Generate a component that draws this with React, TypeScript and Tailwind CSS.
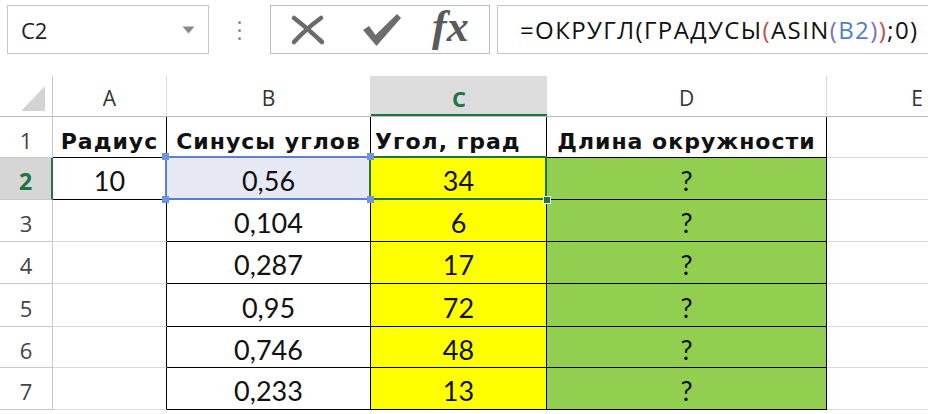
import React from 'react';

const rowHeights = ['h-[41px]', 'h-[42px]', 'h-[42px]', 'h-[42px]', 'h-[43px]', 'h-[41px]', 'h-[42px]'];

const data: [string, string, string][] = [
  ['10', '0,56', '34'],
  ['', '0,104', '6'],
  ['', '0,287', '17'],
  ['', '0,95', '72'],
  ['', '0,746', '48'],
  ['', '0,233', '13'],
];

const valueText = "font-['Lato',sans-serif] text-[27px] text-[#111] pt-[6px]";
const headText = "font-['DejaVu_Sans',sans-serif] font-bold text-[22px] tracking-[1px] text-[#111] pt-[8px] whitespace-nowrap";

function XIcon() {
  return (
    <svg width="36" height="32" viewBox="0 0 36 32">
      <path d="M4 4 Q 17 14 32 28" stroke="#6b6b6b" strokeWidth="4.5" fill="none" strokeLinecap="round" />
      <path d="M31 4 Q 17 14 4 28" stroke="#6b6b6b" strokeWidth="4.5" fill="none" strokeLinecap="round" />
    </svg>
  );
}

function CheckIcon() {
  return (
    <svg width="40" height="34" viewBox="0 0 40 34">
      <path d="M1 17 L7 13 L13.5 22 L35 1 L39 5 L14.5 33 Z" fill="#6d6d6d" />
    </svg>
  );
}

function Handle({ pos, color }: { pos: string; color: string }) {
  return <div className={`absolute w-[7px] h-[7px] ${pos} ${color} z-20`} />;
}

export default function App() {
  return (
    <div className="w-[928px] h-[414px] overflow-hidden bg-white font-['Lato',sans-serif] select-none">
      {/* formula bar */}
      <div className="flex items-start pt-[5px] h-[54px]">
        <div className="ml-[7px] w-[202px] h-[49px] border border-[#c6c6c6] flex items-center justify-between pl-[13px] pr-[13px]">
          <span className="font-['Open_Sans',sans-serif] text-[22px] text-[#222] pt-[1px]">C2</span>
          <svg width="13" height="8" viewBox="0 0 13 8">
            <path d="M0.5 0.5 L12.5 0.5 L6.5 7.5 Z" fill="#8a8a8a" />
          </svg>
        </div>
        <div className="w-[61px] h-[49px] flex flex-col items-center justify-center gap-[5px] pt-[2px]">
          <div className="w-[3px] h-[3px] rounded-full bg-[#8a8a8a]" />
          <div className="w-[3px] h-[3px] rounded-full bg-[#8a8a8a]" />
          <div className="w-[3px] h-[3px] rounded-full bg-[#8a8a8a]" />
        </div>
        <div className="w-[220px] h-[49px] border border-[#bdbdbd] flex items-center pl-[19px]">
          <XIcon />
          <div className="ml-[36px]"><CheckIcon /></div>
          <span className="ml-[30px] font-['Liberation_Serif',serif] italic font-bold text-[44px] leading-none text-[#5a5a5a] pb-[6px]">fx</span>
        </div>
        <div className="ml-[7px] flex-1 h-[49px] border border-[#c6c6c6] border-r-0 flex items-center pl-[22px] whitespace-nowrap">
          <span className="font-['Open_Sans',sans-serif] text-[24px] text-[#111] pt-[1px] tracking-[1.4px]">
            =ОКРУГЛ(ГРАДУСЫ<span className="text-[#c0504d]">(</span>ASIN<span className="text-[#7b6fbe]">(</span><span className="text-[#4f7fc8]">B2</span><span className="text-[#7b6fbe]">)</span><span className="text-[#c0504d]">)</span>;0)
          </span>
        </div>
      </div>

      {/* grid */}
      <div className="mt-[22px] flex flex-col">
        {/* column headers */}
        <div className="flex h-[41px] border-b border-[#bcbcbc]">
          <div className="w-[53px] shrink-0 border-r border-[#c8c8c8] flex items-end justify-end pr-[7px] pb-[5px]">
            <svg width="24" height="25" viewBox="0 0 24 25">
              <path d="M24 0 L24 25 L0 25 Z" fill="#d3d3d3" />
            </svg>
          </div>
          <div className="w-[114px] shrink-0 border-r border-[#dadada] flex items-center justify-center font-['Open_Sans',sans-serif] text-[21px] text-[#333] pt-[6px]">A</div>
          <div className="w-[204px] shrink-0 border-r border-[#dadada] flex items-center justify-center font-['Open_Sans',sans-serif] text-[21px] text-[#333] pt-[6px]">B</div>
          <div className="w-[176px] shrink-0 bg-[#dcdcdc] border-b-2 border-[#217346] flex items-center justify-center font-['Open_Sans',sans-serif] text-[22px] font-bold text-[#217346] pt-[6px]">C</div>
          <div className="w-[280px] shrink-0 border-r border-[#dadada] flex items-center justify-center font-['Open_Sans',sans-serif] text-[21px] text-[#333] pt-[6px]">D</div>
          <div className="w-[180px] shrink-0 flex items-center justify-center font-['Open_Sans',sans-serif] text-[21px] text-[#333] pt-[6px]">E</div>
        </div>

        {/* row 1 */}
        <div className={`flex ${rowHeights[0]}`}>
          <div className="w-[53px] shrink-0 border-r border-b border-[#c8c8c8] flex items-center justify-center font-['Open_Sans',sans-serif] text-[22px] text-[#444] pt-[6px]">1</div>
          <div className={`w-[114px] shrink-0 border-r border-b border-black flex items-center justify-center ${headText}`}>Радиус</div>
          <div className={`w-[204px] shrink-0 border-r border-b border-black flex items-center justify-center ${headText}`}>Синусы углов</div>
          <div className={`w-[176px] shrink-0 border-r border-b border-black flex items-center justify-start pl-[4px] ${headText}`}>Угол, град</div>
          <div className={`w-[280px] shrink-0 border-r border-b border-black flex items-center justify-center ${headText}`}>Длина окружности</div>
          <div className="w-[180px] shrink-0 border-b border-[#dadada]" />
        </div>

        {data.map((r, i) => {
          const active = i === 0;
          return (
            <div key={i} className={`flex ${rowHeights[i + 1]}`}>
              <div
                className={
                  active
                    ? "w-[53px] shrink-0 bg-[#d6d6d6] border-r-2 border-r-[#217346] border-b border-b-[#c8c8c8] flex items-center justify-center font-['Open_Sans',sans-serif] text-[23px] font-bold text-[#217346] pt-[6px]"
                    : "w-[53px] shrink-0 border-r border-b border-[#c8c8c8] flex items-center justify-center font-['Open_Sans',sans-serif] text-[22px] text-[#444] pt-[6px]"
                }
              >
                {i + 2}
              </div>
              <div
                className={
                  i < 1
                    ? `w-[114px] shrink-0 border-r border-b border-black flex items-center justify-center ${valueText}`
                    : `w-[114px] shrink-0 border-r border-r-black border-b border-b-[#dadada] flex items-center justify-center ${valueText}`
                }
              >
                {r[0]}
              </div>
              <div
                className={
                  active
                    ? `relative w-[204px] shrink-0 bg-[#e6e8f3] border-r border-b border-black flex items-center justify-center ${valueText}`
                    : `w-[204px] shrink-0 border-r border-b border-black flex items-center justify-center ${valueText}`
                }
              >
                {r[1]}
                {active && (
                  <>
                    <div className="absolute left-[-2px] top-[-2px] right-[-1px] bottom-[-1px] border-2 border-[#5b80d3] z-10" />
                    <Handle pos="left-[-5px] top-[-5px]" color="bg-[#6f93dc]" />
                    <Handle pos="right-[-4px] top-[-5px]" color="bg-[#6f93dc]" />
                    <Handle pos="left-[-5px] bottom-[-4px]" color="bg-[#6f93dc]" />
                    <Handle pos="right-[-4px] bottom-[-4px]" color="bg-[#6f93dc]" />
                  </>
                )}
              </div>
              <div
                className={
                  active
                    ? `relative w-[176px] shrink-0 bg-[#ffff00] border-r border-b border-black flex items-center justify-center ${valueText}`
                    : `w-[176px] shrink-0 bg-[#ffff00] border-r border-b border-black flex items-center justify-center ${valueText}`
                }
              >
                {r[2]}
                {active && (
                  <>
                    <div className="absolute left-[-2px] top-[-2px] right-[-1px] bottom-[-1px] border-2 border-[#217346] z-10" />
                    <div className="absolute right-[-5px] bottom-[-5px] w-[8px] h-[8px] bg-[#217346] border border-white z-30" />
                  </>
                )}
              </div>
              <div className={`w-[280px] shrink-0 bg-[#92cf50] border-r border-b border-black flex items-center justify-center ${valueText}`}>?</div>
              <div className="w-[180px] shrink-0 border-b border-[#dadada]" />
            </div>
          );
        })}
      </div>
    </div>
  );
}
